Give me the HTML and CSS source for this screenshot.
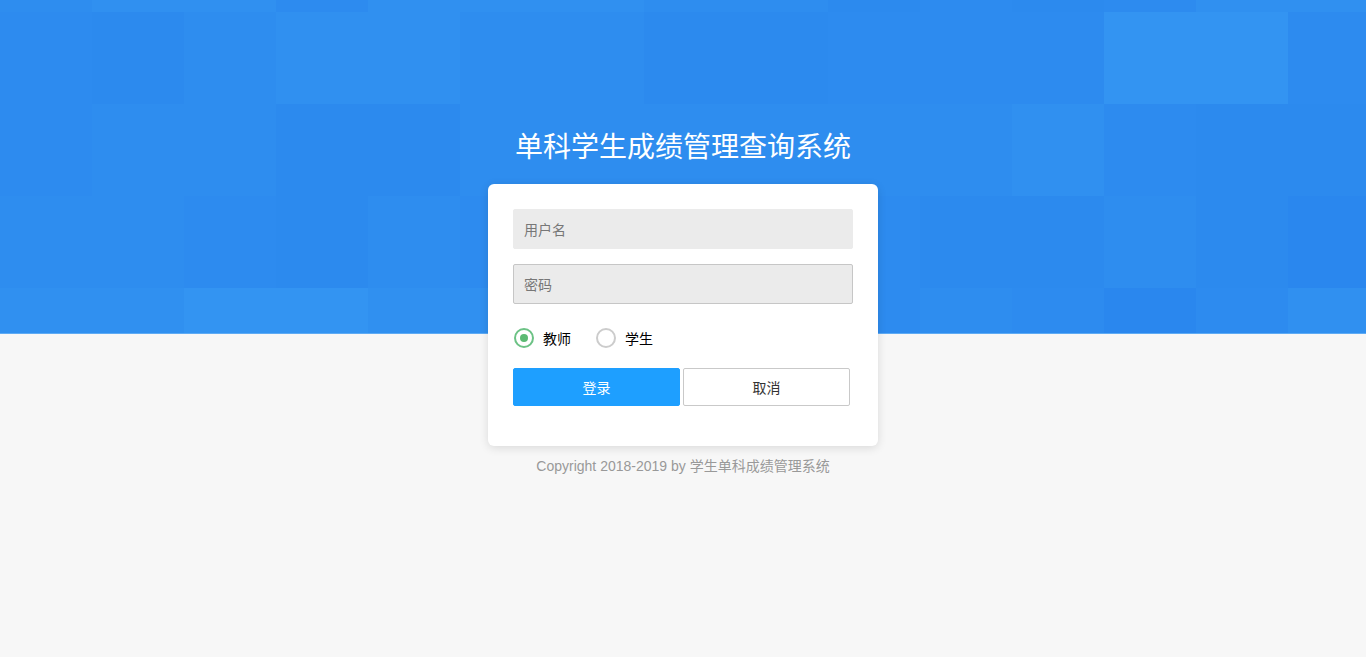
FILE: index.html
```html
<!DOCTYPE html>
<html lang="zh-CN">
<head>
  <meta charset="UTF-8" />
  <meta name="viewport" content="width=device-width, initial-scale=1" />
  <title>单科学生成绩管理查询系统</title>
  <link rel="stylesheet" href="styles.css">
</head>
<body>

  <!-- Hintergrund: Kachelmuster aus Blautönen -->
  <div class="banner">
    <i class="d"></i><i class="e"></i><i class="e"></i><i class="c"></i><i class="e"></i><i class="e"></i><i class="e"></i><i class="d"></i><i class="d"></i><i class="b"></i><i class="c"></i><i class="b"></i><i class="c"></i><i class="e"></i><i class="e"></i>
    <i class="c"></i><i class="b"></i><i class="d"></i><i class="e"></i><i class="e"></i><i class="d"></i><i class="d"></i><i class="b"></i><i class="b"></i><i class="c"></i><i class="c"></i><i class="c"></i><i class="f"></i><i class="f"></i><i class="c"></i>
    <i class="c"></i><i class="d"></i><i class="d"></i><i class="b"></i><i class="b"></i><i class="d"></i><i class="d"></i><i class="d"></i><i class="d"></i><i class="d"></i><i class="d"></i><i class="e"></i><i class="c"></i><i class="b"></i><i class="b"></i>
    <i class="d"></i><i class="d"></i><i class="c"></i><i class="b"></i><i class="d"></i><i class="c"></i><i class="d"></i><i class="c"></i><i class="d"></i><i class="c"></i><i class="b"></i><i class="b"></i><i class="d"></i><i class="b"></i><i class="a"></i>
    <i class="e"></i><i class="e"></i><i class="f"></i><i class="f"></i><i class="e"></i><i class="e"></i><i class="d"></i><i class="c"></i><i class="d"></i><i class="c"></i><i class="d"></i><i class="c"></i><i class="a"></i><i class="c"></i><i class="e"></i>
  </div>

  <div class="page">
    <h1 class="title">单科学生成绩管理查询系统</h1>

    <form class="login-box" onsubmit="return false">
      <input class="field" type="text" placeholder="用户名">
      <input class="field field-focus" type="password" placeholder="密码">

      <div class="roles">
        <label class="role"><input type="radio" name="role" checked><span>教师</span></label>
        <label class="role"><input type="radio" name="role"><span>学生</span></label>
      </div>

      <div class="actions">
        <button class="btn btn-primary" type="submit">登录</button>
        <button class="btn btn-default" type="reset">取消</button>
      </div>
    </form>

    <p class="copyright">Copyright 2018-2019 by 学生单科成绩管理系统</p>
  </div>

</body>
</html>
```

FILE: styles.css
```css
body {
  margin: 0;
  font-family: "Liberation Sans", "Noto Sans CJK SC", sans-serif;
  background-color: #f7f7f7;
  color: #333;
  min-height: 100vh;
}

/* Kachel-Hintergrund liegt hinter dem Inhalt */
.banner {
  position: absolute;
  top: 0;
  left: 0;
  right: 0;
  height: 334px;
  display: grid;
  grid-template-columns: repeat(15, 92px);
  grid-template-rows: 12px 92px 92px 92px 46px;
  overflow: hidden;
  background: #2e8cef;
  border-bottom: 1px solid #5eabf4;
  box-sizing: border-box;
  z-index: 0;
}

.banner i { display: block; }
.banner .a { background: #2a87ee; }
.banner .b { background: #2c8aee; }
.banner .c { background: #2d8bef; }
.banner .d { background: #2e8def; }
.banner .e { background: #3090f0; }
.banner .f { background: #3394f2; }

.page {
  position: relative;
  z-index: 1;
  display: flex;
  flex-direction: column;
  align-items: center;
  padding-top: 125px;
}

.title {
  margin: 0 0 19px;
  font-family: "Noto Sans CJK SC", sans-serif;
  font-size: 28px;
  font-weight: normal;
  line-height: 40px;
  color: #fff;
}

.login-box {
  width: 390px;
  box-sizing: border-box;
  padding: 25px 25px 40px;
  background: #fff;
  border-radius: 6px;
  box-shadow: 0 2px 10px rgba(0, 0, 0, 0.12);
  display: flex;
  flex-direction: column;
}

.field {
  height: 40px;
  width: 340px;
  box-sizing: border-box;
  padding: 0 10px 1px;
  margin: 0 0 15px;
  border: 1px solid #ebebeb;
  border-radius: 2px;
  background: #ebebeb;
  font-family: "Noto Sans CJK SC", sans-serif;
  font-size: 14px;
  color: #333;
  outline: none;
}

.field::placeholder { color: #777; }

.field-focus { border-color: #c6c6c6; }

.roles {
  display: flex;
  align-items: center;
  gap: 25px;
  height: 20px;
  margin: 9px 0 0 1px;
}

.role {
  display: flex;
  align-items: center;
  gap: 9px;
  font-family: "Noto Sans CJK SC", sans-serif;
  font-size: 14px;
  color: #000;
  cursor: pointer;
}

.role input {
  appearance: none;
  -webkit-appearance: none;
  margin: 0;
  width: 20px;
  height: 20px;
  border: 2px solid #ccc;
  border-radius: 50%;
  box-sizing: border-box;
  display: grid;
  place-items: center;
  cursor: pointer;
}

.role input:checked {
  border-color: #6cc285;
}

.role input:checked::after {
  content: "";
  width: 8px;
  height: 8px;
  border-radius: 50%;
  background: #5cba73;
}

.actions {
  display: flex;
  gap: 3px;
  margin-top: 20px;
}

.btn {
  width: 167px;
  height: 38px;
  box-sizing: border-box;
  border-radius: 2px;
  font-family: "Noto Sans CJK SC", sans-serif;
  font-size: 14px;
  cursor: pointer;
}

.btn-primary {
  background: #1e9fff;
  border: 1px solid #1e9fff;
  color: #fff;
}

.btn-default {
  background: #fff;
  border: 1px solid #c9c9c9;
  color: #333;
}

.copyright {
  margin: 11px 0 0;
  font-size: 14px;
  line-height: 18px;
  color: #999;
}
```
